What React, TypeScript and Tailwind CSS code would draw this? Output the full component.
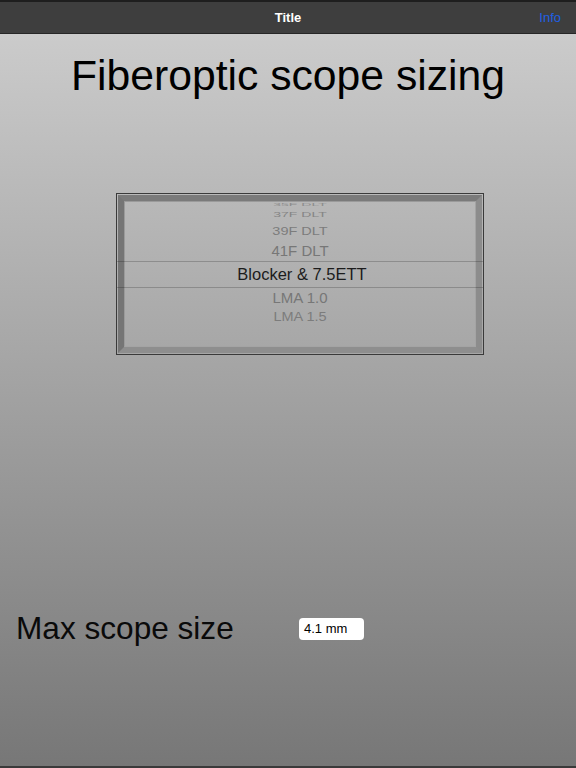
import React from 'react';

const font = { fontFamily: '"Liberation Sans", Arial, sans-serif' };

const wheel = [
  { label: '37F DLT', h: 'h-[16px]', squash: 'scale-y-[0.55]', tone: 'text-[#858585]', size: 'text-[14px]' },
  { label: '39F DLT', h: 'h-[18px]', squash: 'scale-y-[0.8]', tone: 'text-[#7c7c7c]', size: 'text-[14.5px]' },
  { label: '41F DLT', h: 'h-[21px]', squash: 'scale-y-[0.95]', tone: 'text-[#777777]', size: 'text-[15px]' },
];

const below = [
  { label: 'LMA 1.0', h: 'h-[21px]', squash: 'scale-y-[0.95]', tone: 'text-[#777777]', size: 'text-[15px]' },
  { label: 'LMA 1.5', h: 'h-[19px]', squash: 'scale-y-[0.82]', tone: 'text-[#7c7c7c]', size: 'text-[14.5px]' },
];

const WheelRow = ({ row }: { row: (typeof wheel)[number] }) => (
  <div className={`${row.h} flex items-center justify-center`}>
    <span className={`${row.size} ${row.tone} ${row.squash} leading-none whitespace-nowrap`}>{row.label}</span>
  </div>
);

const Picker = () => (
  <div className="relative ml-[116px] w-[368px] h-[162px] border border-[#3a3a3a] p-px">
    <div className="h-full w-full border-[6px] border-t-[#7a7a7a] border-l-[#757575] border-r-[#8c8c8c] border-b-[#8e8e8e]">
      <div className="h-full w-full border border-t-[#9a9a9a] border-l-[#9a9a9a] border-r-[#a4a4a4] border-b-[#a4a4a4] overflow-hidden flex flex-col">
        {/* wheel item scrolled almost out of view */}
        <div className="h-[4px] flex items-end justify-center overflow-hidden">
          <span className="text-[14px] text-[#8c8c8c] leading-none scale-y-[0.3] translate-y-[5px] whitespace-nowrap">35F DLT</span>
        </div>
        {wheel.map((r) => (
          <WheelRow key={r.label} row={r} />
        ))}
        <div className="h-[26px] flex items-center justify-center">
          <span className="text-[16.5px] text-[#1c1c1c] leading-none translate-x-[2px]">Blocker &amp; 7.5ETT</span>
        </div>
        {below.map((r) => (
          <WheelRow key={r.label} row={r} />
        ))}
      </div>
    </div>
    {/* selection lines */}
    <div className="absolute left-0 right-0 top-[67px] h-px bg-black/20" />
    <div className="absolute left-0 right-0 top-[93px] h-px bg-black/20" />
  </div>
);

export default function App() {
  return (
    <div className="w-[576px] h-[768px] flex flex-col overflow-hidden" style={font}>
      <div className="h-[34px] shrink-0 bg-[#3e3e3e] border-t-2 border-t-[#1e1e1e] border-b border-b-[#262626] flex items-center relative">
        <span className="flex-1 text-center text-white text-[13px] font-bold">Title</span>
        <span className="absolute right-[15px] text-[13px] text-[#1f60e4]">Info</span>
      </div>

      <div className="flex-1 flex flex-col bg-[linear-gradient(to_bottom,#cbcbcb,#777777)] border-b-2 border-b-[#3a3a3a]">
        <h1 className="mt-[18px] text-center text-[42.7px] leading-[46px] text-black font-normal">
          Fiberoptic scope sizing
        </h1>

        <div className="mt-[95px]">
          <Picker />
        </div>

        <div className="mt-[258px] flex items-center pl-[16px]">
          <span className="w-[283px] text-[31.6px] leading-none text-[#0a0a0a]">Max scope size</span>
          <div className="w-[65px] h-[22px] rounded-[4px] bg-white flex items-center pl-[5px] text-[13px] text-black">
            4.1 mm
          </div>
        </div>
      </div>
    </div>
  );
}
